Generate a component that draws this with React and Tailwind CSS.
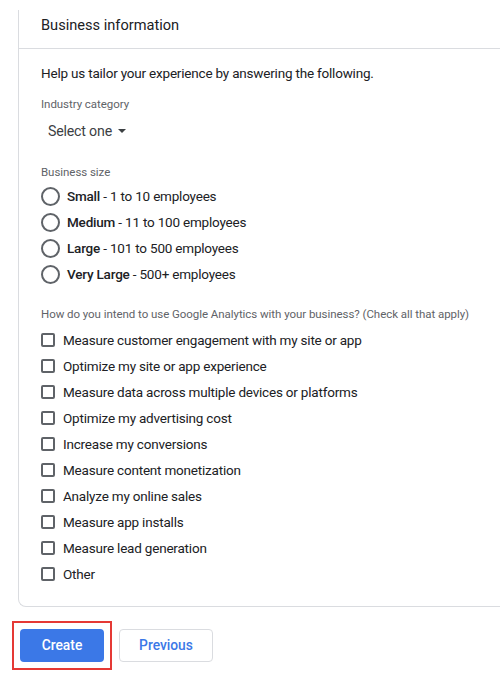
import React from 'react';

const sizes = [
  ['Small', '1 to 10 employees'],
  ['Medium', '11 to 100 employees'],
  ['Large', '101 to 500 employees'],
  ['Very Large', '500+ employees'],
];

const uses = [
  'Measure customer engagement with my site or app',
  'Optimize my site or app experience',
  'Measure data across multiple devices or platforms',
  'Optimize my advertising cost',
  'Increase my conversions',
  'Measure content monetization',
  'Analyze my online sales',
  'Measure app installs',
  'Measure lead generation',
  'Other',
];

export default function App() {
  return (
    <div className="w-[500px] h-[679px] overflow-hidden bg-white text-[#202124]" style={{ fontFamily: 'Roboto, "Liberation Sans", sans-serif' }}>
      <div className="mt-[10px] ml-[18px] w-[520px] border-l border-b border-[#dadce0] rounded-bl-lg">
        {/* header */}
        <div className="h-[39px] pt-[5px] pl-[22px] border-b border-[#dadce0] text-[14.6px] leading-[20px] text-[#202124]">
          Business information
        </div>

        <div className="pl-[22px] pt-[14px] pb-[19px] text-[#202124]">
          <p className="text-[13.5px] tracking-[-0.2px] leading-[20px]">Help us tailor your experience by answering the following.</p>

          <p className="mt-[13px] text-[11.5px] tracking-[-0.05px] leading-[16px] text-[#5f6368]">Industry category</p>
          <button className="mt-[9px] ml-[7px] flex items-center gap-[6px] text-[14.2px] tracking-[-0.2px] leading-[20px] text-[#3c4043]">
            Select one
            <span className="w-0 h-0 border-l-[4px] border-r-[4px] border-t-[4px] border-l-transparent border-r-transparent border-t-[#3c4043]" />
          </button>

          <p className="mt-[23px] text-[11.5px] tracking-[-0.05px] leading-[16px] text-[#5f6368]">Business size</p>
          <div className="mt-[3px] flex flex-col">
            {sizes.map(([name, desc]) => (
              <label key={name} className="h-[26px] flex items-center">
                <span className="w-[19px] h-[19px] rounded-full border-2 border-[#5f6368]" />
                <span className="ml-[7px] text-[13.5px] tracking-[-0.2px]">
                  <span className="font-medium">{name}</span> - {desc}
                </span>
              </label>
            ))}
          </div>

          <p className="mt-[19px] text-[11.5px] tracking-[-0.05px] leading-[16px] text-[#5f6368]">
            How do you intend to use Google Analytics with your business? (Check all that apply)
          </p>
          <div className="mt-[5px] flex flex-col">
            {uses.map((u) => (
              <label key={u} className="h-[26px] flex items-center">
                <span className="w-[14px] h-[14px] rounded-[2px] border-2 border-[#5f6368]" />
                <span className="ml-[8px] text-[13.5px] tracking-[-0.2px]">{u}</span>
              </label>
            ))}
          </div>
        </div>
      </div>

      {/* actions */}
      <div className="mt-[14px] ml-[12px] flex items-center gap-[7px]">
        <div className="border-2 border-[#e53935] p-[6px]">
          <button className="w-[84px] h-[33px] rounded-[4px] bg-[#3b78e7] text-white text-[13.8px] font-medium">
            Create
          </button>
        </div>
        <button className="w-[94px] h-[33px] rounded-[4px] border border-[#dadce0] text-[#3b78e7] text-[13.8px] font-medium">
          Previous
        </button>
      </div>
    </div>
  );
}
